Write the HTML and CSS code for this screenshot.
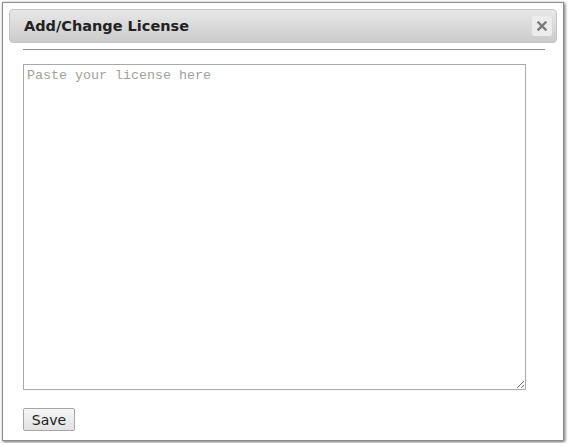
FILE: index.html
```html
<!DOCTYPE html>
<html>
<head>
<meta charset="utf-8">
<link rel="stylesheet" href="styles.css">
</head>
<body>
<div class="dialog">
  <div class="titlebar">
    <span class="title">Add/Change License</span>
    <span class="close"><svg width="10" height="10" viewBox="0 0 10 10"><path d="M1.5 1.5 L8.5 8.5 M8.5 1.5 L1.5 8.5" stroke="#7a7a7a" stroke-width="2.4" stroke-linecap="square"/></svg></span>
  </div>
  <div class="content">
    <div class="rule"></div>
    <textarea class="license" placeholder="Paste your license here"></textarea>
    <div class="actions"><button class="save">Save</button></div>
  </div>
</div>
</body>
</html>
```
FILE: styles.css
```css
html, body { margin: 0; padding: 0; background: #fff; }
.dialog {
  margin: 2px;
  width: 562px;
  height: 439px;
  box-sizing: border-box;
  border: 1px solid #8c8c8c;
  box-shadow: 1px 1px 3px rgba(0,0,0,0.6);
  padding: 6px;
  background: #fff;
  display: flex;
  flex-direction: column;
}
.titlebar {
  height: 34px;
  box-sizing: border-box;
  border: 1px solid #c4c4c4;
  border-radius: 4px;
  background: linear-gradient(#e8e8e8, #cbcbcb);
  display: flex;
  align-items: center;
  justify-content: space-between;
  padding: 0 4px 0 14px;
}
.title {
  font-family: "DejaVu Sans", Verdana, sans-serif;
  font-weight: bold;
  font-size: 14.5px;
  color: #222;
}
.close {
  width: 20px;
  height: 20px;
  border-radius: 3px;
  background: #ececec;
  display: flex;
  align-items: center;
  justify-content: center;
}
.content {
  padding: 0 12px 0 14px;
  display: flex;
  flex-direction: column;
}
.rule {
  margin-top: 6px;
  height: 0;
  border-top: 1px solid #8f8f8f;
}
.license {
  margin: 14px 0 0 0;
  width: 503px;
  height: 326px;
  box-sizing: border-box;
  border: 1px solid #a9a9a9;
  padding: 3px 3px;
  font-family: "Liberation Mono", "Courier New", monospace;
  font-size: 13.33px;
  color: #333;
  resize: both;
  outline: none;
}
.license::placeholder { color: #a0a0a0; }
.actions { margin-top: 18px; display: flex; }
.save {
  height: 23px;
  width: 52px;
  box-sizing: border-box;
  border: 1px solid #a6a6a6;
  border-radius: 2px;
  background: linear-gradient(#f6f6f6, #e2e2e2);
  font-family: "DejaVu Sans", Verdana, sans-serif;
  font-size: 14px;
  color: #222;
  padding: 0;
}
```
